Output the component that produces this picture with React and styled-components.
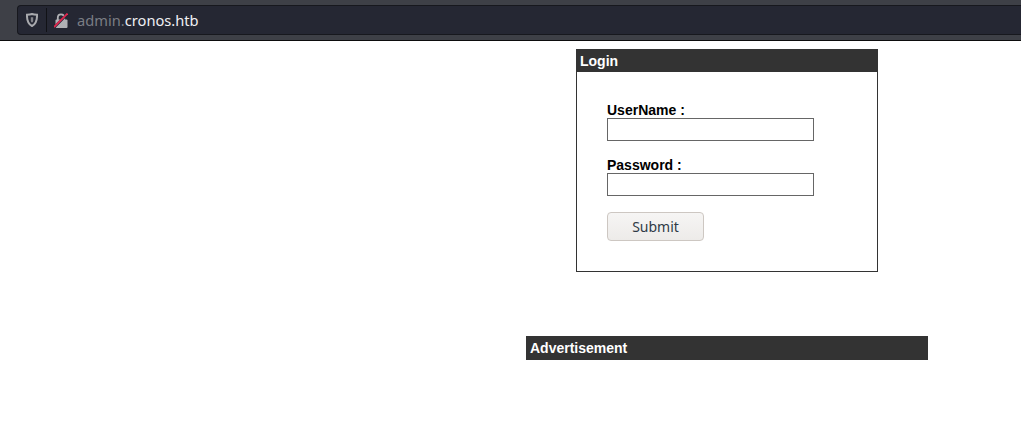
import React from 'react';
import styled, { createGlobalStyle } from 'styled-components';

const GlobalStyle = createGlobalStyle`
html, body {
  margin: 0;
  padding: 0;
  background: #fff;
}
body {
  font-family: "Liberation Sans", Arial, sans-serif;
}
`;

function ShieldIcon() {
  return (
    <svg width="12" height="14" viewBox="0 0 12 14">
      <path d="M6 1 C4.500 1.500 2.800 1.700 1 1.800 C0.800 7 2.200 11 6 13 C9.800 11 11.200 7 11 1.800 C9.200 1.700 7.500 1.500 6 1 Z" fill="none" stroke="#a9aaae" strokeWidth="2" />
      <path d="M4.800 4.300 H7.200 V7.500 C7.200 8.400 6.800 9.200 6 9.600 C5.200 9.200 4.800 8.400 4.800 7.500 Z" fill="#85868c" />
    </svg>
  );
}

function BrokenLockIcon() {
  return (
    <svg width="14" height="15" viewBox="0 0 14 15">
      <path d="M3.800 7 V4.800 C3.800 2.600 5.200 1.300 7 1.300 C8.800 1.300 10.200 2.600 10.200 4.800 V7" fill="none" stroke="#b0b1b5" strokeWidth="1.800" />
      <rect x="1.500" y="6.500" width="12" height="8.500" rx="1" fill="#b0b1b5" />
      <line x1="0" y1="14.500" x2="13.500" y2="1" stroke="#252733" strokeWidth="2.600" />
      <line x1="0" y1="14" x2="13.500" y2="0.500" stroke="#e2264f" strokeWidth="1.800" />
    </svg>
  );
}

function App() {
  return (
    <>
      <GlobalStyle />
      <Toolbar>
        <UrlBar>
          <IconSlot><ShieldIcon /></IconSlot>
          <Divider />
          <LockSlot><BrokenLockIcon /></LockSlot>
          <Url><Sub>admin.</Sub>cronos.htb</Url>
        </UrlBar>
      </Toolbar>
      <Page>
        <Column>
          <LoginBox>
            <Heading>Login</Heading>
            <LoginForm onSubmit={(e) => e.preventDefault()}>
              <Field>
                <Label htmlFor="username">UserName :</Label>
                <Input id="username" type="text" />
              </Field>
              <Field>
                <Label htmlFor="password">Password :</Label>
                <Input id="password" type="password" />
              </Field>
              <Submit type="submit">Submit</Submit>
            </LoginForm>
          </LoginBox>
          <AdHeading>Advertisement</AdHeading>
        </Column>
      </Page>
    </>
  );
}

export default App;

const Toolbar = styled.header`
box-sizing: border-box;
height: 41px;
padding: 5px 0 5px 17px;
background: #3e4047;
border-bottom: 1px solid #0c0c0d;
`;

const UrlBar = styled.div`
box-sizing: border-box;
height: 30px;
display: flex;
align-items: center;
background: #252733;
border: 1px solid #17181e;
border-right: none;
border-radius: 4px 0 0 4px;
`;

const IconSlot = styled.span`
display: flex;
margin-left: 8px;
`;

const LockSlot = styled.span`
display: flex;
margin-left: 7px;
`;

const Divider = styled.span`
width: 1px;
height: 24px;
margin-left: 8px;
background: #111216;
`;

const Url = styled.span`
margin-left: 9px;
font-family: "Noto Sans", sans-serif;
font-size: 14.67px;
color: #f0f0f4;
`;

const Sub = styled.span`
color: #7a7d84;
`;

const Page = styled.main`
display: flex;
padding: 8px 0 0 526px;
`;

const Column = styled.div`
width: 402px;
display: flex;
flex-direction: column;
align-items: center;
`;

const LoginBox = styled.section`
box-sizing: border-box;
width: 302px;
height: 223px;
border: 1px solid #333;
`;

const Heading = styled.h2`
margin: 0;
height: 22px;
padding: 0 3px;
background: #333;
color: #fff;
font-size: 14px;
font-weight: bold;
line-height: 22px;
`;

const LoginForm = styled.form`
display: flex;
flex-direction: column;
align-items: flex-start;
padding: 30px 30px 0;
`;

const Field = styled.div`
display: flex;
flex-direction: column;
margin-bottom: 16px;
`;

const Label = styled.label`
height: 16px;
color: #000;
font-size: 14px;
font-weight: bold;
line-height: 16px;
`;

const Input = styled.input`
box-sizing: border-box;
width: 207px;
height: 23px;
padding: 0 2px;
background: #fff;
border: 1px solid #666;
border-radius: 0;
outline: none;
`;

const Submit = styled.button`
box-sizing: border-box;
width: 97px;
height: 29px;
padding: 0;
background: linear-gradient(#f6f5f4, #edebe9);
border: 1px solid #cdc7c2;
border-radius: 4px;
color: #2e3a46;
font-family: "Noto Sans", sans-serif;
font-size: 14px;
`;

const AdHeading = styled.h2`
box-sizing: border-box;
align-self: stretch;
margin: 64px 0 0;
height: 24px;
padding: 0 4px;
background: #333;
color: #fff;
font-size: 14px;
font-weight: bold;
line-height: 24px;
`;
